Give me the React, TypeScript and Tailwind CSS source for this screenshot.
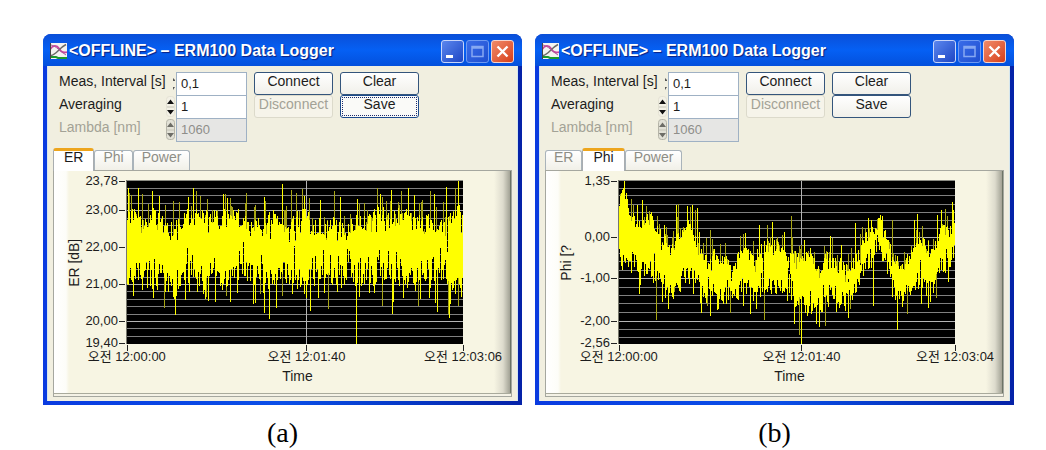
import { useId } from "react";
import type { ReactNode } from "react";

type Point = [number, number];
type Band = [number, number, number];

interface Tick {
  text: string;
  at: number;
}

interface ChartSpec {
  axis: string;
  seed: number;
  jitter: number;
  yTicks: Tick[];
  grid: number[];
  majors: number[];
  middle: number;
  times: [string, string, string];
  band: Band[];
  peaks: Point[];
  dips: Point[];
}

const LEFT = 74;
const RIGHT = 411;
const TOP = 11;
const BOTTOM = 174;

const erChart: ChartSpec = {
  axis: "ER [dB]",
  seed: 71,
  jitter: 36,
  yTicks: [
    { text: "23,78", at: 11 },
    { text: "23,00", at: 40 },
    { text: "22,00", at: 77 },
    { text: "21,00", at: 114 },
    { text: "20,00", at: 151 },
    { text: "19,40", at: 173 },
  ],
  grid: [18, 25, 33, 40, 48, 55, 62, 70, 77, 84, 92, 99, 107, 114, 121, 129, 136, 144, 151, 158, 166],
  majors: [40, 77, 114, 151],
  middle: 254,
  times: ["오전 12:00:00", "오전 12:01:40", "오전 12:03:06"],
  band: [
    [74, 44, 105], [90, 52, 108], [100, 44, 108], [117, 62, 112], [128, 50, 104],
    [140, 44, 100], [152, 46, 108], [170, 48, 110], [185, 48, 98], [198, 56, 104],
    [212, 50, 104], [224, 46, 108], [240, 54, 106], [252, 42, 108], [262, 58, 104],
    [272, 56, 106], [284, 50, 104], [293, 66, 100], [302, 54, 106], [314, 52, 106],
    [325, 42, 102], [340, 48, 108], [354, 44, 108], [370, 54, 104], [380, 52, 106],
    [392, 58, 108], [404, 44, 112], [411, 42, 108],
  ],
  peaks: [
    [75, 18], [85, 18], [89, 24], [99, 21], [106, 26], [120, 31], [135, 27], [140, 18],
    [154, 29], [170, 24], [174, 28], [193, 23], [211, 27], [230, 14], [239, 20],
    [252, 26], [268, 30], [282, 21], [288, 27], [305, 29], [325, 18], [328, 24],
    [339, 20], [349, 21], [356, 18], [362, 25], [378, 21], [382, 24], [394, 17], [403, 18], [406, 11],
  ],
  dips: [
    [100, 128], [111, 138], [122, 145], [136, 122], [153, 127], [155, 131], [162, 132],
    [173, 126], [184, 123], [202, 133], [207, 124], [211, 143], [216, 149], [230, 126],
    [254, 128], [258, 141], [276, 139], [304, 174], [307, 127], [330, 136], [340, 144],
    [351, 128], [366, 136], [368, 129], [385, 142], [396, 144], [397, 148], [398, 134], [406, 136], [409, 127],
  ],
};

const phiChart: ChartSpec = {
  axis: "Phi [?",
  seed: 29,
  jitter: 26,
  yTicks: [
    { text: "1,35", at: 11 },
    { text: "0,00", at: 67 },
    { text: "-1,00", at: 108 },
    { text: "-2,00", at: 151 },
    { text: "-2,56", at: 173 },
  ],
  grid: [18, 25, 34, 42, 50, 58, 67, 75, 83, 91, 100, 108, 117, 125, 133, 142, 151, 159, 167],
  majors: [67, 108, 151],
  middle: 257,
  times: ["오전 12:00:00", "오전 12:01:40", "오전 12:03:04"],
  band: [
    [74, 22, 78], [78, 16, 96], [83, 36, 92], [89, 46, 96], [96, 54, 98], [106, 46, 94],
    [112, 60, 106], [121, 74, 112], [128, 80, 122], [136, 58, 112], [146, 54, 98],
    [153, 80, 116], [161, 90, 124], [171, 84, 126], [181, 92, 128], [191, 90, 118],
    [201, 78, 116], [211, 86, 124], [221, 74, 112], [231, 76, 116], [244, 84, 118],
    [256, 90, 132], [266, 84, 136], [276, 96, 136], [286, 84, 120], [296, 94, 124],
    [301, 98, 132], [311, 92, 116], [318, 74, 104], [326, 60, 92], [331, 60, 88],
    [337, 46, 86], [344, 74, 98], [351, 90, 116], [358, 98, 124], [366, 84, 114],
    [373, 66, 104], [381, 76, 114], [391, 76, 112], [397, 60, 96], [406, 62, 90], [411, 52, 82],
  ],
  peaks: [
    [77, 20], [79, 11], [86, 29], [92, 35], [97, 30], [101, 36], [119, 55], [131, 35], [133, 34],
    [142, 36], [147, 35], [150, 40], [152, 38], [154, 62], [165, 60], [200, 63], [214, 55],
    [222, 55], [227, 52], [240, 62], [247, 46], [260, 70], [286, 66], [288, 68], [297, 75],
    [311, 53], [316, 64], [324, 48], [327, 50], [335, 49], [336, 45], [338, 48], [348, 50],
    [370, 50], [373, 44], [378, 56], [393, 45], [397, 40], [401, 39], [408, 32], [409, 40],
  ],
  dips: [
    [94, 124], [111, 150], [117, 132], [123, 139], [129, 122], [148, 124], [156, 143],
    [162, 136], [172, 140], [178, 134], [185, 143], [193, 130], [205, 144], [219, 150],
    [226, 124], [250, 154], [255, 165], [257, 174], [267, 144], [281, 156], [292, 142],
    [304, 148], [306, 139], [329, 136], [353, 160], [363, 144], [377, 134], [384, 138], [392, 128], [404, 112],
  ],
};

function bandAt(band: Band[], x: number): Point {
  let i = 0;
  while (i < band.length - 2 && band[i + 1][0] <= x) i += 1;
  const [x0, top0, low0] = band[i];
  const [x1, top1, low1] = band[i + 1];
  const t = (x - x0) / (x1 - x0);
  return [top0 + (top1 - top0) * t, low0 + (low1 - low0) * t];
}

function traces({ band, seed, jitter, peaks, dips }: ChartSpec) {
  let state = seed;
  const random = () => {
    state = (state * 16807) % 2147483647;
    return state / 2147483647;
  };
  let bright = "";
  let dim = "";
  for (let x = LEFT; x < RIGHT; x += 1) {
    const [top, low] = bandAt(band, x);
    const upNotch = random() < 0.2 ? random() * jitter * 0.55 : 0;
    const downNotch = random() < 0.3 ? random() * jitter * 0.65 : 0;
    const high = Math.round(top + jitter * 0.25 - random() * jitter * 0.5 + upNotch);
    const down = Math.round(low - jitter * 0.25 + random() * jitter * 0.6 - downNotch);
    bright += `M${x} ${high}h1V${down}h-1z`;
    if (random() < 0.25) dim += `M${x} ${Math.max(TOP, Math.round(high - random() * jitter * 0.7))}h1V${high}h-1z`;
    if (random() < 0.28) bright += `M${x} ${down}h1v${Math.round(random() * jitter * 0.6)}h-1z`;
  }
  const center = (x: number) => {
    const [top, low] = bandAt(band, x);
    return Math.round((top + low) / 2);
  };
  peaks.forEach(([x, y], i) => {
    const part = `M${x} ${y}h1V${center(x)}h-1z`;
    if (i % 3 === 2) dim += part;
    else bright += part;
  });
  dips.forEach(([x, y], i) => {
    const part = `M${x} ${center(x)}h1V${y}h-1z`;
    if (i % 3 === 1) dim += part;
    else bright += part;
  });
  return { bright, dim };
}

function Chart({ spec }: { spec: ChartSpec }) {
  const { bright, dim } = traces(spec);
  const marks = [LEFT, spec.middle, RIGHT];
  return (
    <svg viewBox="1 1 457 222" className="block h-auto w-full" role="img" aria-label={spec.axis}>
      <g shapeRendering="crispEdges">
        <rect x={LEFT} y={TOP} width={RIGHT - LEFT} height={BOTTOM - TOP} fill="#000" />
        {spec.grid.map((y) => (
          <rect key={y} x={LEFT} y={y} width={RIGHT - LEFT} height="1" fill={spec.majors.includes(y) ? "#b4b4b4" : "#808080"} />
        ))}
        <rect x={LEFT} y={TOP - 1} width={RIGHT - LEFT} height="1" fill="#8c8c84" />
        <rect x={spec.middle} y={TOP} width="1" height={BOTTOM - TOP} fill="#b4b4b4" />
        <path d={dim} fill="#a8a614" />
        <path d={bright} fill="#ffff00" />
        <rect x={LEFT - 1} y={TOP - 1} width="1" height={BOTTOM - TOP + 1} fill="#77776c" />
        {spec.yTicks.map((t) => (
          <rect key={t.text} x="66" y={t.at} width="6" height="1" fill="#222" />
        ))}
        {marks.map((x) => (
          <rect key={x} x={x} y={BOTTOM + 1} width="1" height="6" fill="#222" />
        ))}
      </g>
      <g fill="#1c1c1c" className="text-[13px]">
        {spec.yTicks.map((t) => (
          <text key={t.text} x="65" y={t.at + 4} textAnchor="end">
            {t.text}
          </text>
        ))}
      </g>
      <g fill="#1c1c1c" className="text-[13px]" textAnchor="middle">
        {spec.times.map((t, i) => (
          <text key={t} x={marks[i]} y="191">
            {t}
          </text>
        ))}
      </g>
      <g fill="#1c1c1c" className="text-[14px]" textAnchor="middle">
        <text x="245" y="211">
          Time
        </text>
        <text transform="translate(26 93) rotate(-90)">{spec.axis}</text>
      </g>
    </svg>
  );
}

function LoggerIcon() {
  return (
    <svg viewBox="0 0 17 16" className="h-4 w-[17px] shrink-0" aria-hidden="true">
      <rect width="17" height="16" fill="#f4f4f0" />
      <path d="M0 6.500C3 1.500 7 2 9 5.500s4 5 8 3.500" fill="none" stroke="#c9459f" strokeWidth="1.800" />
      <path d="M1 12.500C6 12 9 5 16 1.500" fill="none" stroke="#6a6a66" strokeWidth="1.500" />
      <path d="M1 2c5 1 9 6 15 10" fill="none" stroke="#a85a98" strokeWidth="1" />
      <path d="M0 14h6l2 1h9" fill="none" stroke="#1c9a2c" strokeWidth="2" />
      <path d="M.5 0v16" stroke="#444" />
    </svg>
  );
}

function CaptionButton({ label, tone, children }: { label: string; tone: string; children: ReactNode }) {
  return (
    <button type="button" aria-label={label} className={`h-[23px] w-[23px] rounded-[3px] border ${tone}`}>
      <svg viewBox="0 0 21 21" className="block h-full w-full" aria-hidden="true">
        {children}
      </svg>
    </button>
  );
}

function Spinner({ disabled = false, clipped = false }: { disabled?: boolean; clipped?: boolean }) {
  if (clipped) {
    return (
      <svg viewBox="0 0 10 23" className="h-[23px] w-2.5" aria-hidden="true">
        <path d="M7 6l2 2v1H7zM7 15h2l-2 3z" fill="#555" />
      </svg>
    );
  }
  return (
    <svg viewBox="0 0 10 23" className="h-[23px] w-2.5" aria-hidden="true">
      <rect x=".5" y="1.500" width="8" height="20" rx="3" fill={disabled ? "#e2e1d6" : "#f3f1e6"} stroke={disabled ? "#b5b4a8" : "#e4e2d4"} />
      <path d="M4.500 4.500L8 9H1zM1 15h7l-3.500 4.500z" fill={disabled ? "#6d6d66" : "#111"} />
      <path d="M1 12h7" stroke="#c4c3b6" />
    </svg>
  );
}

function Field({ label, value, disabled = false, clipped = false }: { label: string; value: string; disabled?: boolean; clipped?: boolean }) {
  const id = useId();
  return (
    <div className="-mb-px flex h-6">
      <label htmlFor={id} className={`w-[107px] whitespace-nowrap leading-[19px] ${disabled ? "text-[#a3a296]" : "text-[#1c1c1c]"}`}>
        {label}
      </label>
      <Spinner disabled={disabled} clipped={clipped} />
      <input
        id={id}
        defaultValue={value}
        disabled={disabled}
        className={`h-6 w-[71px] rounded-none border border-[#9fb1c4] px-1 pb-0.5 text-[13px] leading-5 outline-none ${disabled ? "bg-[#e6e6e4] text-[#8e8e8a]" : "bg-white text-[#1c1c1c]"}`}
      />
    </div>
  );
}

function PushButton({ children, disabled = false, focused = false }: { children: string; disabled?: boolean; focused?: boolean }) {
  const look = disabled
    ? "border-[#dcdacb] bg-[#f6f4ea] text-[#a3a296]"
    : focused
      ? "border-[#1c4a8c] bg-[#fafaf8] text-[#1c1c1c] outline-1 outline-dotted -outline-offset-3 outline-[#1a2a6c]"
      : "border-[#34557c] bg-linear-to-b from-white to-[#f1f0ea] text-[#1c1c1c]";
  return (
    <button type="button" disabled={disabled} className={`flex h-[23px] w-[79px] justify-center rounded-[3px] border leading-[17px] ${look}`}>
      {children}
    </button>
  );
}

function Tabs({ active }: { active: string }) {
  return (
    <div role="tablist" className="flex h-[22px] items-end">
      {["ER", "Phi", "Power"].map((name) =>
        name === active ? (
          <button
            key={name}
            type="button"
            role="tab"
            aria-selected="true"
            className="relative -mb-px h-[23px] rounded-t-[3px] border-x border-t-3 border-x-[#a9adb0] border-t-[#eda51d] bg-white px-2.5 leading-[13px] text-[#1c1c1c]"
          >
            <span className="flex h-full items-start">{name}</span>
          </button>
        ) : (
          <button
            key={name}
            type="button"
            role="tab"
            aria-selected="false"
            className="h-5 rounded-t-[3px] border border-b-0 border-[#a9b3ba] bg-linear-to-b from-white to-[#f1f0e8] px-2 leading-[13px] text-[#8e8e86]"
          >
            <span className="flex h-full items-start">{name}</span>
          </button>
        ),
      )}
    </div>
  );
}

function LoggerWindow({ tab, chart, saveFocused = false }: { tab: string; chart: ChartSpec; saveFocused?: boolean }) {
  return (
    <section className="rounded-t-lg bg-linear-to-r from-[#0a3be0] via-[#0b4fe8] to-[#0522a8] px-1 pb-1">
      <header className="-mx-1 flex h-8 items-center rounded-t-lg bg-linear-to-b from-[#0a4fd8] via-[#0560f4] to-[#0450dc] pr-2 pl-[7px] pt-0.5">
        <LoggerIcon />
        <h2 className="ml-0.5 flex-1 whitespace-nowrap text-[16px] font-bold text-white [text-shadow:1px_1px_1px_#0a1f80]">
          &lt;OFFLINE&gt; – ERM100 Data Logger
        </h2>
        <div className="flex gap-0.5">
          <CaptionButton label="Minimize" tone="border-[#c8d6fa] bg-linear-to-br from-[#5b86ee] to-[#1f45c4]">
            <path d="M4 14h7v3H4z" fill="#fff" />
          </CaptionButton>
          <CaptionButton label="Maximize" tone="border-[#6f9af2] bg-linear-to-br from-[#3a6ce8] to-[#1f4fd0]">
            <path d="M5 5.500h11v10H5zM5 7h11" fill="none" stroke="#86a8f2" strokeWidth="1.500" />
          </CaptionButton>
          <CaptionButton label="Close" tone="border-[#f6d5cc] bg-linear-to-br from-[#f08a68] to-[#d63c14]">
            <path d="M5.500 5.500l10 10M15.500 5.500l-10 10" stroke="#fff" strokeWidth="2.400" />
          </CaptionButton>
        </div>
      </header>
      <div className="border-x border-[#d5e6ee] bg-[#f1efe0] px-[5px] pt-1.5 pb-1">
        <div className="flex items-start gap-[7px] pl-1.5">
          <div className="pb-px">
            <Field label="Meas, Interval [s]" value="0,1" clipped />
            <Field label="Averaging" value="1" />
            <Field label="Lambda [nm]" value="1060" disabled />
          </div>
          <div className="grid grid-cols-2 gap-x-[7px]">
            <PushButton>Connect</PushButton>
            <PushButton>Clear</PushButton>
            <PushButton disabled>Disconnect</PushButton>
            <PushButton focused={saveFocused}>Save</PushButton>
          </div>
        </div>
        <div className="mt-1.5">
          <Tabs active={tab} />
          <div className="border border-[#a5a79f] bg-white">
            <div className="border-t-3 border-b border-t-white border-b-[#a9aa9c]">
              <div className="-mt-[3px] border-r border-[#6c7466] bg-[linear-gradient(to_right,#fff_0,#fdfdf8_12px,#f7f5e3_15px,#f7f5e3_calc(100%-16px),#dddbcd_calc(100%-7px),#a2a295_100%)]">
                <Chart spec={chart} />
              </div>
            </div>
            <div className="h-0.5 bg-[#f4f2e6]" />
          </div>
        </div>
      </div>
    </section>
  );
}

export default function App() {
  return (
    <main className="min-h-screen bg-white pt-[34px] pr-8 pl-[43px] font-['Liberation_Sans','Noto_Sans_CJK_KR',sans-serif] text-[14px]">
      <div className="grid grid-cols-2 gap-x-[13px]">
        <figure>
          <LoggerWindow tab="ER" chart={erChart} saveFocused />
          <figcaption className="mt-3 text-center font-['Liberation_Serif',serif] text-[28px] leading-8 text-black">(a)</figcaption>
        </figure>
        <figure>
          <LoggerWindow tab="Phi" chart={phiChart} />
          <figcaption className="mt-3 text-center font-['Liberation_Serif',serif] text-[28px] leading-8 text-black">(b)</figcaption>
        </figure>
      </div>
    </main>
  );
}
